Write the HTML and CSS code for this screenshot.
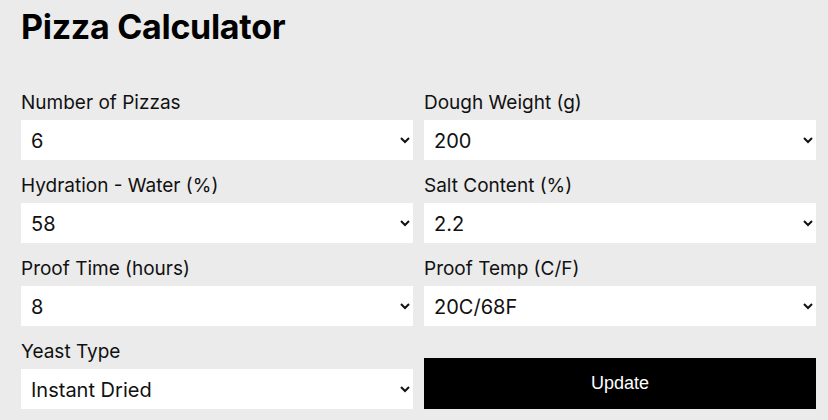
FILE: index.html
```html
<!DOCTYPE html>
<html lang="en">
<head>
  <meta charset="UTF-8" />
  <meta name="viewport" content="width=device-width, initial-scale=1.0"/>
  <title>Pizza Calculator</title>
  <link rel="stylesheet" href="styles.css">
</head>
<body>
  <div class="calculator">
    <h1>Pizza Calculator</h1>

    <div class="fields">
      <div class="field">
        <label for="pizzas">Number of Pizzas</label>
        <select id="pizzas">
          <option>4</option>
          <option>5</option>
          <option selected>6</option>
          <option>8</option>
        </select>
      </div>

      <div class="field">
        <label for="weight">Dough Weight (g)</label>
        <select id="weight">
          <option>180</option>
          <option selected>200</option>
          <option>250</option>
        </select>
      </div>

      <div class="field">
        <label for="hydration">Hydration - Water (%)</label>
        <select id="hydration">
          <option>56</option>
          <option selected>58</option>
          <option>60</option>
        </select>
      </div>

      <div class="field">
        <label for="salt">Salt Content (%)</label>
        <select id="salt">
          <option>2.0</option>
          <option selected>2.2</option>
          <option>2.5</option>
        </select>
      </div>

      <div class="field">
        <label for="proof">Proof Time (hours)</label>
        <select id="proof">
          <option>6</option>
          <option selected>8</option>
          <option>24</option>
        </select>
      </div>

      <div class="field">
        <label for="temp">Proof Temp (C/F)</label>
        <select id="temp">
          <option>18C/64F</option>
          <option selected>20C/68F</option>
          <option>22C/72F</option>
        </select>
      </div>

      <div class="field">
        <label for="yeast">Yeast Type</label>
        <select id="yeast">
          <option selected>Instant Dried</option>
          <option>Active Dried</option>
          <option>Fresh</option>
        </select>
      </div>

      <div class="field field-button">
        <button class="update">Update</button>
      </div>
    </div>
  </div>
</body>
</html>
```

FILE: styles.css
```css
* {
  margin: 0;
  padding: 0;
  box-sizing: border-box;
  font-family: "Inter", "Open Sans", sans-serif;
}

body {
  background-color: #ebebeb;
  color: #111;
}

.calculator {
  padding: 5px 12px 0 21px;
}

h1 {
  font-size: 34px;
  font-weight: 700;
  line-height: 44px;
  letter-spacing: -0.3px;
  color: #000;
  margin-bottom: 41px;
}

.fields {
  display: grid;
  grid-template-columns: 1fr 1fr;
  column-gap: 11px;
  row-gap: 13px;
}

.field {
  display: flex;
  flex-direction: column;
}

label {
  display: block;
  font-size: 19px;
  line-height: 23px;
  padding-top: 1px;
  margin-bottom: 6px;
  color: #111;
}

select {
  width: 100%;
  height: 40px;
  padding: 2px 6px 0;
  border: none;
  border-radius: 0;
  background-color: #fff;
  font-size: 20px;
  color: #111;
}

.field-button {
  justify-content: flex-end;
}

button.update {
  width: 100%;
  height: 51px;
  background-color: #000;
  color: #fff;
  border: none;
  font-family: "Liberation Sans", Arial, sans-serif;
  font-size: 18px;
  cursor: pointer;
}
```
